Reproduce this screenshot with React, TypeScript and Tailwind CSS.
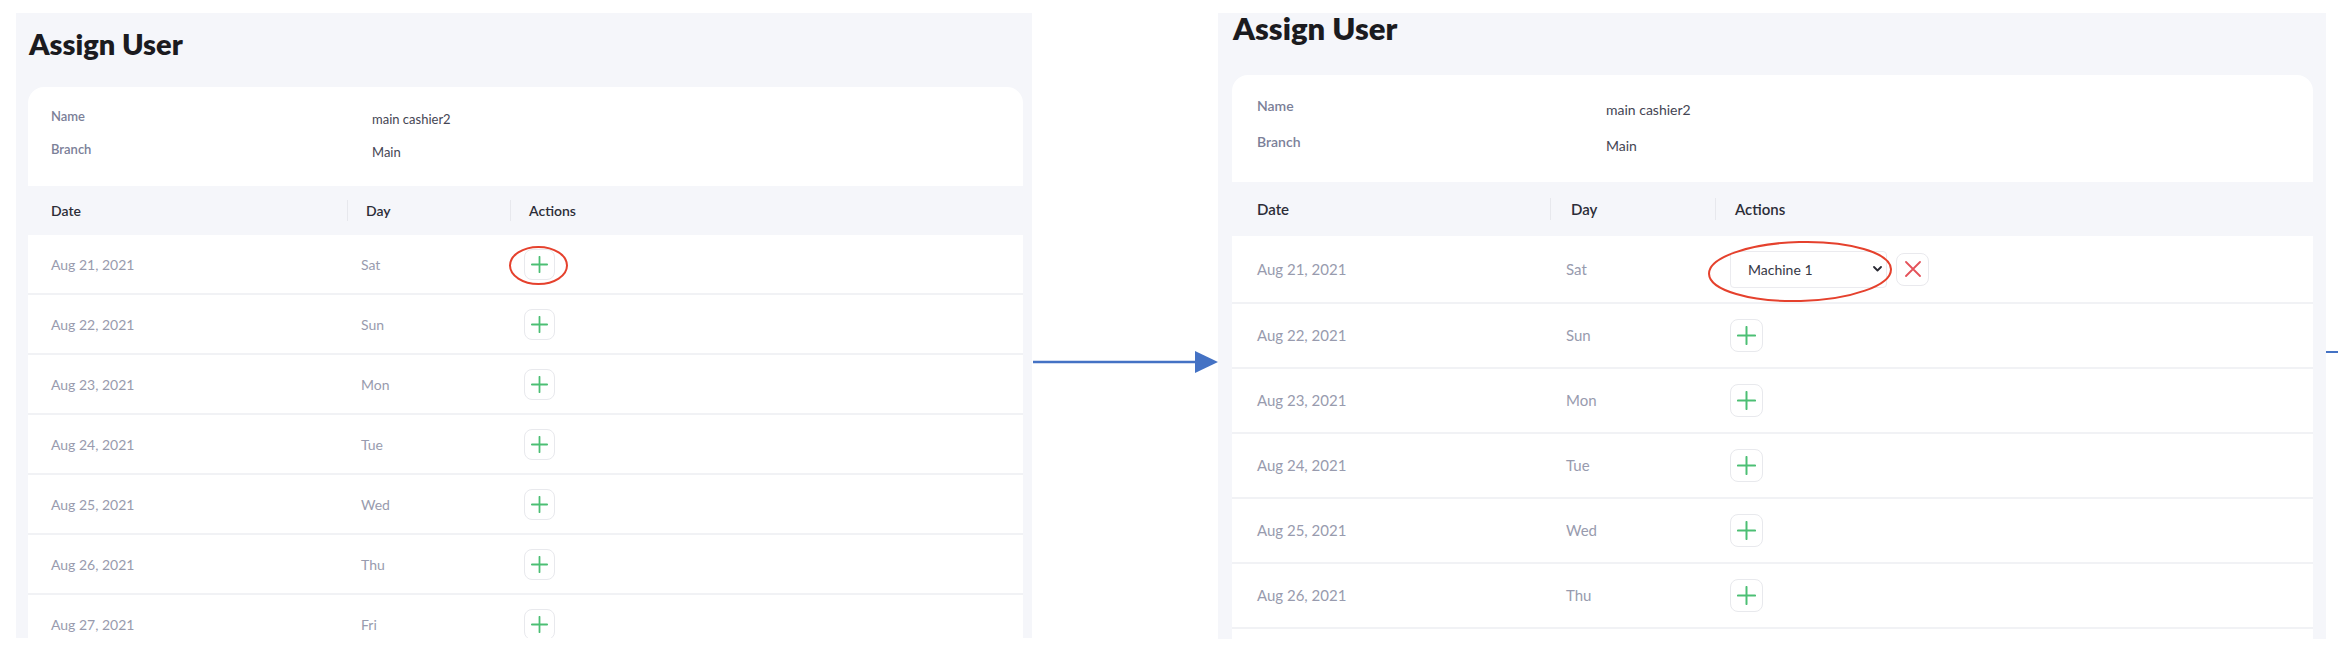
import React from 'react';

const rows: [string, string][] = [
  ['Aug 21, 2021', 'Sat'],
  ['Aug 22, 2021', 'Sun'],
  ['Aug 23, 2021', 'Mon'],
  ['Aug 24, 2021', 'Tue'],
  ['Aug 25, 2021', 'Wed'],
  ['Aug 26, 2021', 'Thu'],
  ['Aug 27, 2021', 'Fri'],
];

function PlusIcon({ size }: { size: number }) {
  return (
    <svg width={size} height={size} viewBox="0 0 20 20" fill="none">
      <path d="M10 1V19M1 10H19" stroke="#4cbf74" strokeWidth="2.1" strokeLinecap="round" />
    </svg>
  );
}

function PlusButtonA() {
  return (
    <div className="w-[31px] h-[31px] border border-[#e8e9ed] rounded-[8px] bg-white flex items-center justify-center">
      <PlusIcon size={17} />
    </div>
  );
}

function PlusButtonB() {
  return (
    <div className="w-[33px] h-[33px] border border-[#e8e9ed] rounded-[8px] bg-white flex items-center justify-center">
      <PlusIcon size={19} />
    </div>
  );
}

function PanelA() {
  return (
    <div className="w-[1016px] h-[625px] shrink-0 bg-[#f5f6fa] pl-[12px] pr-[9px] pt-[14px] flex flex-col">
      <h1 className="text-[29px] leading-[34px] font-extrabold text-[#1b1b1f] pl-[1px]">Assign User</h1>
      <div className="mt-[26px] bg-white rounded-t-[16px] flex-1 min-h-0 overflow-hidden">
        <div className="h-[99px] pt-[19px] pl-[23px] flex flex-col gap-[10px]">
          <div className="flex">
            <div className="w-[321px] text-[13px] leading-[20px] font-semibold text-[#7b8098]">Name</div>
            <div className="pt-[3px] text-[13px] leading-[20px] text-[#444553]">main cashier2</div>
          </div>
          <div className="flex">
            <div className="w-[321px] text-[13px] leading-[20px] font-semibold text-[#7b8098]">Branch</div>
            <div className="pt-[3px] text-[13px] leading-[20px] text-[#444553]">Main</div>
          </div>
        </div>
        <div className="h-[49px] bg-[#f5f6fa] flex items-center text-[14px] font-semibold text-[#2c2d38]">
          <div className="w-[319px] pl-[23px]">Date</div>
          <div className="w-[163px] flex items-center">
            <span className="w-px h-[21px] bg-[#e7e8ed]" />
            <span className="pl-[18px]">Day</span>
          </div>
          <div className="flex items-center">
            <span className="w-px h-[21px] bg-[#e7e8ed]" />
            <span className="pl-[18px]">Actions</span>
          </div>
        </div>
        {rows.map(([d, day], i) => (
          <div key={d} className="h-[60px] border-b-2 border-[#f1f2f5] flex items-center text-[14px] text-[#989bae]">
            <div className="w-[319px] pl-[23px]">{d}</div>
            <div className="w-[163px] pl-[14px]">{day}</div>
            <div className="pl-[14px]">
              {i === 0 ? (
                <div className="relative">
                  <PlusButtonA />
                  <svg className="absolute left-[-15px] top-[-3px] overflow-visible" width="59" height="39" viewBox="0 0 59 39" fill="none">
                    <ellipse cx="29.5" cy="19.5" rx="28.5" ry="18.5" stroke="#e5412d" strokeWidth="2" />
                  </svg>
                </div>
              ) : (
                <PlusButtonA />
              )}
            </div>
          </div>
        ))}
      </div>
    </div>
  );
}

function PanelB() {
  return (
    <div className="w-[1108px] h-[626px] shrink-0 bg-[#f5f6fa] pl-[14px] pr-[13px] flex flex-col">
      <h1 className="text-[31px] leading-[30px] font-extrabold text-[#1b1b1f] pl-[1px]">Assign User</h1>
      <div className="mt-[32px] bg-white rounded-t-[16px] flex-1 min-h-0 overflow-hidden">
        <div className="h-[107px] pt-[20px] pl-[25px] flex flex-col gap-[10px]">
          <div className="flex">
            <div className="w-[349px] text-[14px] leading-[22px] font-semibold text-[#7b8098]">Name</div>
            <div className="pt-[4px] text-[14px] leading-[22px] text-[#444553]">main cashier2</div>
          </div>
          <div className="flex">
            <div className="w-[349px] text-[14px] leading-[22px] font-semibold text-[#7b8098]">Branch</div>
            <div className="pt-[4px] text-[14px] leading-[22px] text-[#444553]">Main</div>
          </div>
        </div>
        <div className="h-[54px] bg-[#f5f6fa] flex items-center text-[15px] font-semibold text-[#2c2d38]">
          <div className="w-[318px] pl-[25px]">Date</div>
          <div className="w-[165px] flex items-center">
            <span className="w-px h-[22px] bg-[#e7e8ed]" />
            <span className="pl-[20px]">Day</span>
          </div>
          <div className="flex items-center">
            <span className="w-px h-[22px] bg-[#e7e8ed]" />
            <span className="pl-[19px]">Actions</span>
          </div>
        </div>
        {rows.slice(0, 6).map(([d, day], i) => (
          <div
            key={d}
            className={
              i === 0
                ? 'h-[68px] border-b-2 border-[#f1f2f5] flex items-center text-[15px] text-[#989bae]'
                : 'h-[65px] border-b-2 border-[#f1f2f5] flex items-center text-[15px] text-[#989bae]'
            }
          >
            <div className="w-[318px] pl-[25px]">{d}</div>
            <div className="w-[165px] pl-[16px]">{day}</div>
            <div className="pl-[15px]">
              {i === 0 ? (
                <div className="flex items-center">
                  <div className="relative">
                    <div className="w-[157px] h-[37px] border border-[#ebebef] rounded-[4px] bg-white pl-[17px] pr-[4px] flex items-center justify-between text-[14px] text-[#363745]">
                      <span>Machine 1</span>
                      <svg width="9" height="6" viewBox="0 0 9 6" fill="none">
                        <path d="M1 1L4.5 4.5L8 1" stroke="#2a2a33" strokeWidth="1.8" strokeLinecap="round" strokeLinejoin="round" />
                      </svg>
                    </div>
                    <svg className="absolute left-[-22px] top-[-10px] overflow-visible" width="184" height="61" viewBox="0 0 184 61" fill="none">
                      <ellipse cx="92" cy="30.5" rx="91" ry="29.5" stroke="#e5412d" strokeWidth="2" transform="rotate(-1.5 92 30.5)" />
                    </svg>
                  </div>
                  <div className="ml-[9px] w-[33px] h-[33px] border border-[#e9e9ed] rounded-[8px] bg-white flex items-center justify-center">
                    <svg width="16" height="16" viewBox="0 0 16 16" fill="none">
                      <path d="M1 1L15 15M15 1L1 15" stroke="#e4525a" strokeWidth="1.8" strokeLinecap="round" />
                    </svg>
                  </div>
                </div>
              ) : (
                <PlusButtonB />
              )}
            </div>
          </div>
        ))}
      </div>
    </div>
  );
}

export default function App() {
  return (
    <div className="w-[2338px] h-[656px] bg-white overflow-hidden pt-[13px] pl-[16px] flex items-start font-['Lato','Noto_Sans',sans-serif]">
      <PanelA />
      <div className="w-[186px] shrink-0 mt-[338px]">
        <svg width="186" height="22" viewBox="0 0 186 22" fill="none">
          <path d="M1 11H165" stroke="#4472c4" strokeWidth="2.5" />
          <polygon points="163,0 186,11 163,22" fill="#4472c4" />
        </svg>
      </div>
      <PanelB />
      <div className="w-[12px] h-[2px] shrink-0 mt-[338px] bg-[#4472c4]" />
    </div>
  );
}
